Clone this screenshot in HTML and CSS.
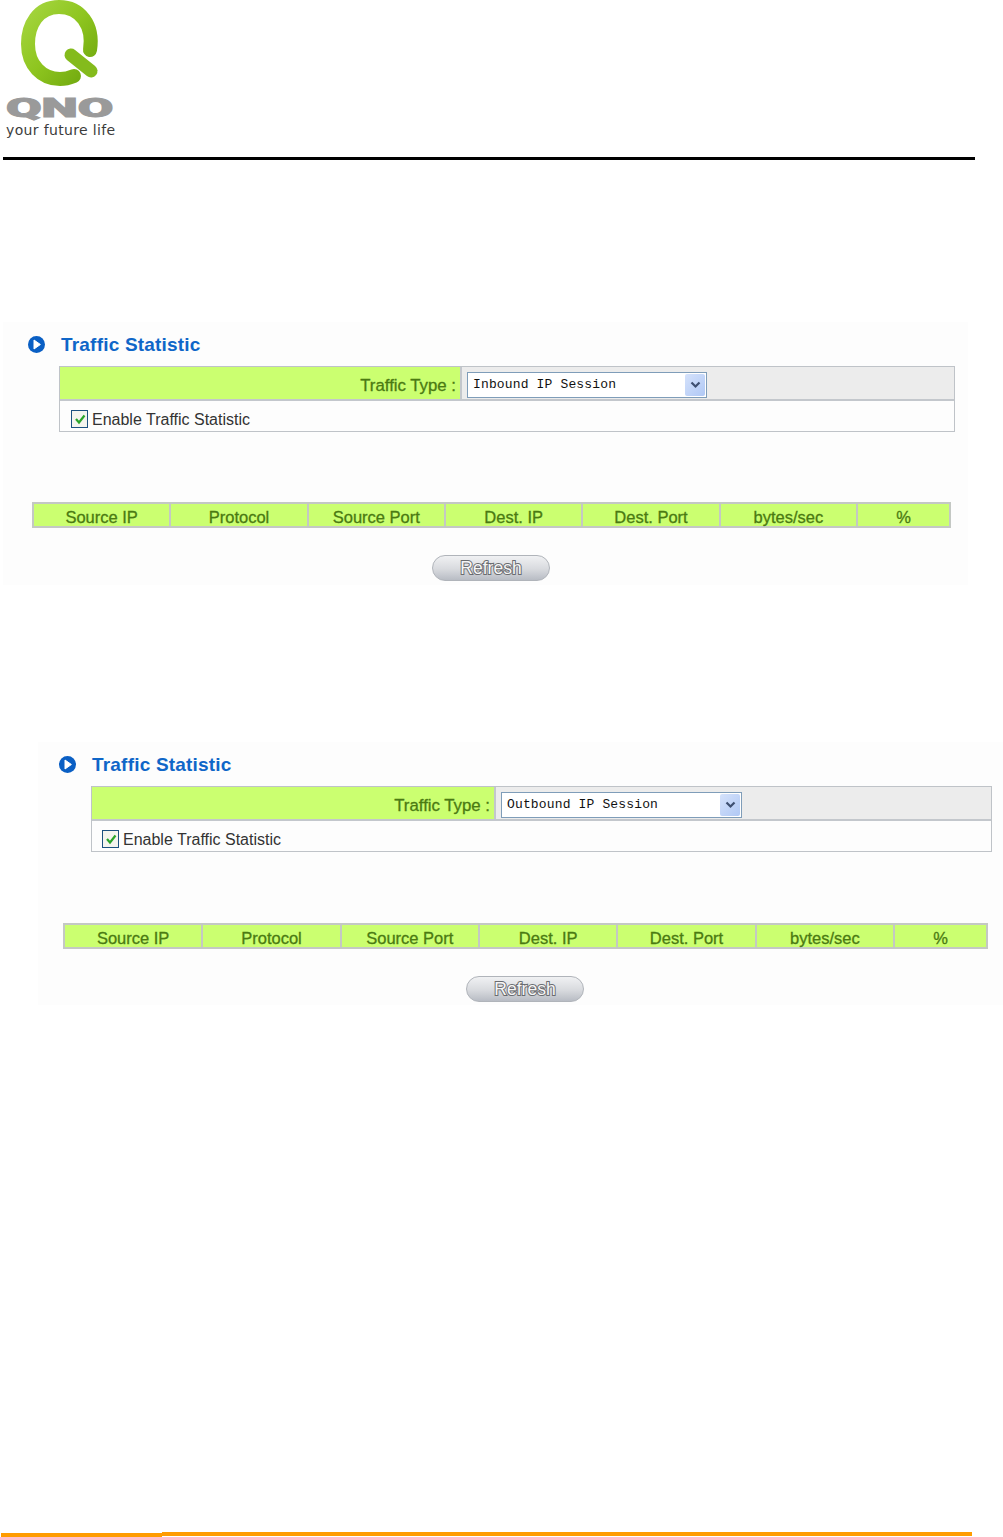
FILE: index.html
```html
<!DOCTYPE html>
<html>
<head>
  <title>Traffic Statistic</title>
  <link rel="stylesheet" href="styles.css">
</head>
<body>
  <div class="page-header">
    <div class="logo">
      <svg class="logo-mark" width="120" height="90" viewBox="0 0 120 90">
        <defs>
          <linearGradient id="ringGreen" x1="0" y1="0" x2="1" y2="1">
            <stop offset="0" stop-color="#a4d53e"/>
            <stop offset="0.5" stop-color="#8ec51f"/>
            <stop offset="1" stop-color="#6fa70e"/>
          </linearGradient>
        </defs>
        <path d="M90 50 C94 25 80 7 59 7 C38 7 28 25 28 44 C28 65 42 79 60 79 C65 79 69 78 74 76" fill="none" stroke="url(#ringGreen)" stroke-width="14" stroke-linecap="round"/>
        <path d="M71 55 L91 71" fill="none" stroke="#84bb1c" stroke-width="13" stroke-linecap="round"/>
      </svg>
      <div class="logo-name">QNO</div>
      <div class="logo-tag">your future life</div>
    </div>
  </div>

  <div class="panel panel-inbound">
    <div class="panel-title">
      <svg width="17" height="17" viewBox="0 0 17 17"><circle cx="8.5" cy="8.5" r="8.5" fill="#0a5fc4"/><path d="M6 4 L12.4 8.5 L6 13 Z" fill="#fff" stroke="#fff" stroke-linejoin="round"/></svg>
      <span>Traffic Statistic</span>
    </div>
    <div class="form-box">
      <div class="form-row row-type">
        <div class="type-label">Traffic Type :</div>
        <div class="type-value">
          <div class="fake-select">
            <span class="select-text">Inbound IP Session</span>
            <span class="select-arrow"><svg width="11" height="8" viewBox="0 0 11 8"><path d="M1.5 1.5 L5.5 5.5 L9.5 1.5" fill="none" stroke="#3e4f70" stroke-width="2.2"/></svg></span>
          </div>
        </div>
      </div>
      <div class="form-row row-enable">
        <span class="check"><svg width="12" height="12" viewBox="0 0 12 12"><path d="M2 6 L5 9.5 L10.5 2.5" fill="none" stroke="#2aa52a" stroke-width="2.2"/></svg></span>
        <span>Enable Traffic Statistic</span>
      </div>
    </div>
    <div class="data-block">
      <table class="data-table">
        <tr><th>Source IP</th><th>Protocol</th><th>Source Port</th><th>Dest. IP</th><th>Dest. Port</th><th>bytes/sec</th><th class="col-pct">%</th></tr>
      </table>
      <div class="refresh-btn">Refresh</div>
    </div>
  </div>

  <div class="panel panel-outbound">
    <div class="panel-title">
      <svg width="17" height="17" viewBox="0 0 17 17"><circle cx="8.5" cy="8.5" r="8.5" fill="#0a5fc4"/><path d="M6 4 L12.4 8.5 L6 13 Z" fill="#fff" stroke="#fff" stroke-linejoin="round"/></svg>
      <span>Traffic Statistic</span>
    </div>
    <div class="form-box">
      <div class="form-row row-type">
        <div class="type-label">Traffic Type :</div>
        <div class="type-value">
          <div class="fake-select">
            <span class="select-text">Outbound IP Session</span>
            <span class="select-arrow"><svg width="11" height="8" viewBox="0 0 11 8"><path d="M1.5 1.5 L5.5 5.5 L9.5 1.5" fill="none" stroke="#3e4f70" stroke-width="2.2"/></svg></span>
          </div>
        </div>
      </div>
      <div class="form-row row-enable">
        <span class="check"><svg width="12" height="12" viewBox="0 0 12 12"><path d="M2 6 L5 9.5 L10.5 2.5" fill="none" stroke="#2aa52a" stroke-width="2.2"/></svg></span>
        <span>Enable Traffic Statistic</span>
      </div>
    </div>
    <div class="data-block">
      <table class="data-table">
        <tr><th>Source IP</th><th>Protocol</th><th>Source Port</th><th>Dest. IP</th><th>Dest. Port</th><th>bytes/sec</th><th class="col-pct">%</th></tr>
      </table>
      <div class="refresh-btn">Refresh</div>
    </div>
  </div>

  <div class="page-footer">
    <div class="foot-a"></div>
    <div class="foot-b"></div>
    <div class="foot-c"></div>
  </div>
</body>
</html>
```

FILE: styles.css
```css
html, body {
  margin: 0;
  padding: 0;
}

body {
  display: flex;
  flex-direction: column;
  height: 1537px;
  overflow: hidden;
  background-color: #fff;
  font-family: "Liberation Sans", Arial, sans-serif;
}

.page-header {
  height: 157px;
  width: 972px;
  margin-left: 3px;
  border-bottom: 3px solid #000;
}

.logo {
  width: 120px;
  height: 157px;
}

.logo-mark {
  display: block;
  margin-left: -3px;
}

.logo-name {
  width: 54px;
  height: 22px;
  margin: 7px 0 0 3px;
  font-family: "Roboto", sans-serif;
  font-weight: 900;
  font-size: 26px;
  line-height: 22px;
  color: #9a9a9a;
  -webkit-text-stroke: 1px #9a9a9a;
  transform: scaleX(1.98);
  transform-origin: left center;
}

.logo-tag {
  font-family: "DejaVu Sans", sans-serif;
  font-size: 14px;
  line-height: 16px;
  letter-spacing: 0.35px;
  color: #3c3c3c;
  margin-left: 3px;
  margin-top: 3px;
  white-space: nowrap;
}

.panel {
  box-sizing: border-box;
  width: 965px;
  height: 263px;
  padding-top: 14px;
  background-color: #fdfdfd;
}

.panel-inbound {
  margin: 162px 0 0 3px;
  padding-left: 25px;
}

.panel-outbound {
  margin: 157px 0 0 38px;
  padding-left: 21px;
}

.panel-title {
  display: flex;
  align-items: center;
  gap: 16px;
  height: 17px;
  font-size: 19px;
  font-weight: bold;
  letter-spacing: 0.2px;
  color: #0f66c8;
}

.form-box {
  box-sizing: border-box;
  width: 896px;
  height: 66px;
  margin: 13px 0 0 31px;
  border: 1px solid #bfc3c8;
  font-size: 16px;
}

.panel-outbound .form-box {
  width: 901px;
  margin-left: 32px;
}

.form-row {
  display: flex;
  align-items: center;
}

.row-type {
  height: 34px;
  border-bottom: 2px solid #c3c7cc;
  box-sizing: border-box;
  background-color: #ececec;
}

.row-enable {
  height: 30px;
  padding: 8px 0 0 11px;
  box-sizing: border-box;
  color: #333;
}

.panel-outbound .row-enable {
  padding-left: 10px;
}

.type-label {
  box-sizing: border-box;
  width: 402px;
  height: 100%;
  padding: 2px 4px 0 0;
  font-size: 16.8px;
  line-height: 33px;
  text-align: right;
  background-color: #cbff70;
  border-right: 2px solid #c3c7cc;
  color: #4a7a12;
  -webkit-text-stroke: 0.3px #4a7a12;
}

.panel-outbound .type-label {
  width: 404px;
}

.type-value {
  padding: 4px 0 0 5px;
}

.fake-select {
  display: flex;
  align-items: center;
  justify-content: space-between;
  box-sizing: border-box;
  width: 240px;
  height: 26px;
  padding: 0 1px 0 5px;
  border: 1px solid #7f9db9;
  background-color: #fff;
  font-family: "Liberation Mono", monospace;
  font-size: 13px;
  letter-spacing: 0.15px;
  color: #111;
}

.select-text {
  margin-top: -2px;
}

.panel-outbound .fake-select {
  width: 241px;
}

.select-arrow {
  display: flex;
  align-items: center;
  justify-content: center;
  width: 20px;
  height: 22px;
  border-radius: 2px;
  background: linear-gradient(135deg, #d5e2fb, #b0c8f5);
}

.check {
  display: flex;
  align-items: center;
  justify-content: center;
  box-sizing: border-box;
  width: 17px;
  height: 18px;
  margin: -3px 4px 0 0;
  border: 1px solid #1c5180;
  background-color: #f4f4ee;
}

.data-block {
  width: 919px;
  margin: 70px 0 0 4px;
}

.panel-outbound .data-block {
  width: 925px;
  margin-top: 71px;
}

.data-table {
  width: 100%;
  height: 26px;
  border-collapse: collapse;
  table-layout: fixed;
}

.data-table th {
  padding: 3px 0 0;
  border: 2px solid #c4c8c4;
  background-color: #cbff70;
  font-size: 16.5px;
  line-height: 18px;
  font-weight: normal;
  color: #4a7a12;
  -webkit-text-stroke: 0.3px #4a7a12;
}

.data-table .col-pct {
  width: 91px;
}

.refresh-btn {
  box-sizing: border-box;
  width: 118px;
  height: 26px;
  margin: 27px 0 0 400px;
  border: 1px solid #b0b4ba;
  border-radius: 13px;
  background: linear-gradient(#f0f1f3, #d8dade 55%, #b8bcc4);
  font-size: 17.5px;
  line-height: 24px;
  text-align: center;
  color: #f6f6f6;
  -webkit-text-stroke: 2px #6a6c70;
  paint-order: stroke fill;
}

.panel-outbound .refresh-btn {
  margin-left: 403px;
}

.page-footer {
  display: flex;
  align-items: flex-start;
  width: 971px;
  height: 6px;
  margin: auto 0 0 1px;
  background-color: #fff;
}

.foot-a {
  width: 161px;
  height: 4px;
  margin-top: 2px;
  background-color: #ff9c00;
}

.foot-b {
  width: 405px;
  height: 4px;
  margin-top: 1px;
  background-color: #ff9c00;
}

.foot-c {
  width: 405px;
  height: 4px;
  margin-top: 1px;
  background-color: #ff9c00;
}
```
